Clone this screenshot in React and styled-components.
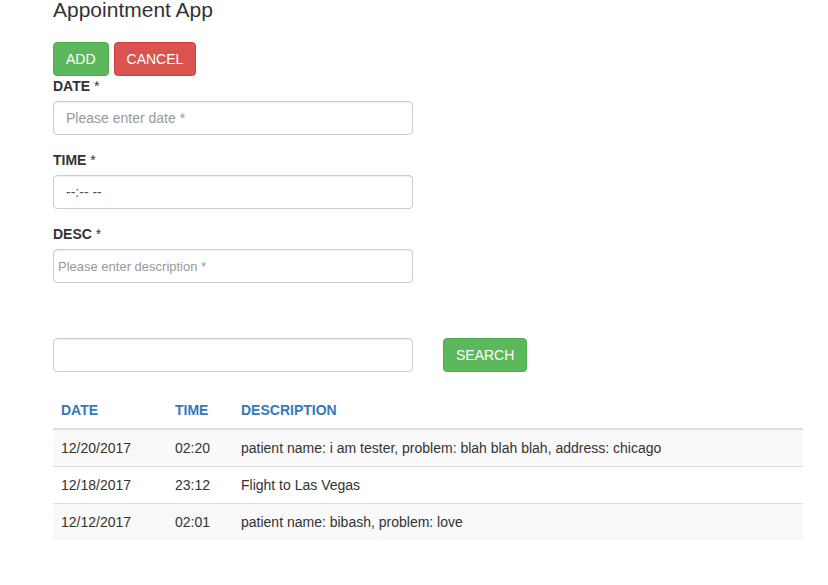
import React from "react";
import styled, { createGlobalStyle } from "styled-components";

const GlobalStyle = createGlobalStyle`
  body {
    margin: 0;
    background: #fff;
    font-family: "Liberation Sans", Arial, sans-serif;
    font-size: 14px;
    line-height: 20px;
    color: #333;
  }
`;

const Container = styled.div`
  width: 750px;
  padding-left: 53px;
`;

const Title = styled.h3`
  margin: 0 0 22px;
  font-size: 21px;
  line-height: 20px;
  font-weight: 400;
  color: #333;
`;

const ButtonRow = styled.div`
  display: flex;
  gap: 5px;
`;

const Button = styled.button`
  height: 34px;
  padding: 6px 12px;
  font-family: inherit;
  font-size: 14px;
  line-height: 20px;
  color: #fff;
  border-radius: 4px;
  border: 1px solid ${(p) => (p.$variant === "danger" ? "#d43f3a" : "#4cae4c")};
  background: ${(p) => (p.$variant === "danger" ? "#d9534f" : "#5cb85c")};
  cursor: pointer;
`;

const Form = styled.div`
  display: flex;
  flex-direction: column;
`;

const FormGroup = styled.div`
  display: flex;
  flex-direction: column;
  margin-bottom: 15px;
`;

const Label = styled.label`
  display: block;
  height: 20px;
  font-weight: 700;
  margin-bottom: 5px;
  line-height: 20px;
`;

const Star = styled.span`
  font-weight: 400;
`;

const Input = styled.input`
  box-sizing: border-box;
  width: 360px;
  height: 34px;
  padding: ${(p) => (p.$compact ? "0 4px" : "6px 12px")};
  font-family: inherit;
  font-size: ${(p) => (p.$compact ? "13px" : "14px")};
  color: #555;
  border: 1px solid #ccc;
  border-radius: 4px;
  box-shadow: inset 0 1px 1px rgba(0, 0, 0, 0.075);
  outline: none;

  &::placeholder {
    color: #999;
  }
`;

const SearchRow = styled.div`
  display: flex;
  align-items: center;
  gap: 30px;
  margin-top: 40px;
  margin-bottom: 20px;
`;

const Table = styled.table`
  width: 750px;
  border-collapse: collapse;
  border-spacing: 0;
`;

const Th = styled.th`
  text-align: left;
  padding: 8px;
  line-height: 20px;
  color: #337ab7;
  font-weight: 700;
  border-bottom: 2px solid #ddd;
  width: ${(p) => p.$w || "auto"};
`;

const Tr = styled.tr`
  background: ${(p) => (p.$striped ? "#f9f9f9" : "#fff")};
`;

const Td = styled.td`
  padding: 8px;
  line-height: 20px;
  border-top: 1px solid #ddd;
`;

const rows = [
  { date: "12/20/2017", time: "02:20", desc: "patient name: i am tester, problem: blah blah blah, address: chicago" },
  { date: "12/18/2017", time: "23:12", desc: "Flight to Las Vegas" },
  { date: "12/12/2017", time: "02:01", desc: "patient name: bibash, problem: love" },
];

const App = () => {
  return (
    <Container>
      <GlobalStyle />
      <Title>Appointment App</Title>
      <ButtonRow>
        <Button>ADD</Button>
        <Button $variant="danger">CANCEL</Button>
      </ButtonRow>
      <Form>
        <FormGroup>
          <Label>
            DATE <Star>*</Star>
          </Label>
          <Input placeholder="Please enter date *" />
        </FormGroup>
        <FormGroup>
          <Label>
            TIME <Star>*</Star>
          </Label>
          <Input readOnly defaultValue="--:-- --" />
        </FormGroup>
        <FormGroup>
          <Label>
            DESC <Star>*</Star>
          </Label>
          <Input $compact placeholder="Please enter description *" />
        </FormGroup>
      </Form>
      <SearchRow>
        <Input />
        <Button>SEARCH</Button>
      </SearchRow>
      <Table>
        <thead>
          <tr>
            <Th $w="98px">DATE</Th>
            <Th $w="50px">TIME</Th>
            <Th>DESCRIPTION</Th>
          </tr>
        </thead>
        <tbody>
          {rows.map((r, i) => (
            <Tr key={i} $striped={i % 2 === 0}>
              <Td>{r.date}</Td>
              <Td>{r.time}</Td>
              <Td>{r.desc}</Td>
            </Tr>
          ))}
        </tbody>
      </Table>
    </Container>
  );
};

export default App;
